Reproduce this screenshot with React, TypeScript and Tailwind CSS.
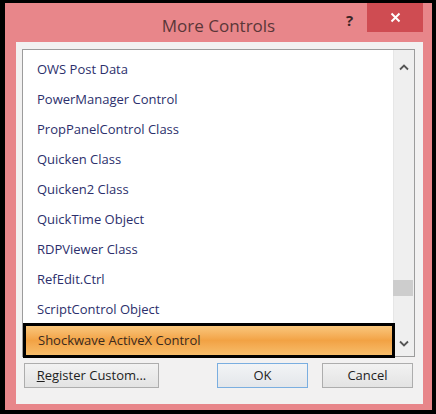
import React from "react";

const items = [
  "OWS Post Data",
  "PowerManager Control",
  "PropPanelControl Class",
  "Quicken Class",
  "Quicken2 Class",
  "QuickTime Object",
  "RDPViewer Class",
  "RefEdit.Ctrl",
  "ScriptControl Object",
];

export default function App() {
  return (
    <div
      className="w-[436px] h-[414px] bg-black pt-[3px] pl-[5px] pr-[4px] pb-[4px]"
      style={{ fontFamily: '"Open Sans", "Noto Sans", sans-serif' }}
    >
      <div className="w-full h-full bg-[#e8868a] flex flex-col">
        {/* title bar */}
        <div className="relative h-[39px] flex-none">
          <div className="absolute left-0 right-0 top-[12px] text-center text-[17px] leading-[22px] text-[#5b3638]">
            More Controls
          </div>
          <div className="absolute left-[341px] top-[7px] text-[15px] font-bold text-[#3a2526] leading-[20px]">
            ?
          </div>
          <div className="absolute left-[362px] top-0 w-[56px] h-[29px] bg-[#cf4c52] flex items-center justify-center">
            <svg width="11" height="11" viewBox="0 0 11 11">
              <path d="M1.5 1.5 L9.5 9.5 M9.5 1.5 L1.5 9.5" stroke="#ffffff" strokeWidth="2" />
            </svg>
          </div>
        </div>
        {/* content */}
        <div className="flex-1 ml-[11px] mr-[9px] mb-[6px] bg-[#f2f1f1] pt-[7px] pl-[6px] pr-[8px] flex flex-col">
          <div className="h-[308px] border border-[#9c9c9c] bg-white flex">
            <div className="flex-1 pt-[5px] relative z-10">
              {items.map((t) => (
                <div
                  key={t}
                  className="h-[30px] flex items-center pl-[14px] text-[13px] text-[#2c2f6c]"
                >
                  {t}
                </div>
              ))}
              <div className="-mt-[2px] h-[35px] border-[3px] border-black mr-[-2px] bg-gradient-to-b from-[#f9c77c] via-[#f2a244] to-[#f7bd6a] flex items-center pl-[12px] text-[13px] text-[#3a2a1e]">
                Shockwave ActiveX Control
              </div>
            </div>
            <div className="w-[21px] bg-[#efefef] border-l border-[#e6e6e6] flex flex-col items-center relative">
              <svg className="mt-[14px]" width="10" height="7" viewBox="0 0 10 7">
                <path d="M1 5.5 L5 1.5 L9 5.5" stroke="#555" strokeWidth="1.8" fill="none" />
              </svg>
              <div className="absolute left-[-1px] top-[230px] w-[20px] h-[16px] bg-[#cdcdcd]" />
              <svg className="mt-auto mb-[9px]" width="10" height="7" viewBox="0 0 10 7">
                <path d="M1 1.5 L5 5.5 L9 1.5" stroke="#555" strokeWidth="1.8" fill="none" />
              </svg>
            </div>
          </div>
          <div className="flex mt-[6px] h-[25px] pl-[2px]">
            <button className="w-[135px] h-[25px] border border-[#adadad] bg-gradient-to-b from-[#f2f2f2] to-[#e3e3e3] text-[13px] text-[#1e1e1e]">
              <span className="underline">R</span>egister Custom...
            </button>
            <button className="ml-[58px] w-[91px] h-[25px] border border-[#7aaee0] bg-gradient-to-b from-[#f2f4f6] to-[#e3e6ea] text-[13px] text-[#1e1e1e]">
              OK
            </button>
            <button className="ml-[14px] w-[91px] h-[25px] border border-[#adadad] bg-gradient-to-b from-[#f2f2f2] to-[#e3e3e3] text-[13px] text-[#1e1e1e]">
              Cancel
            </button>
          </div>
        </div>
      </div>
    </div>
  );
}
